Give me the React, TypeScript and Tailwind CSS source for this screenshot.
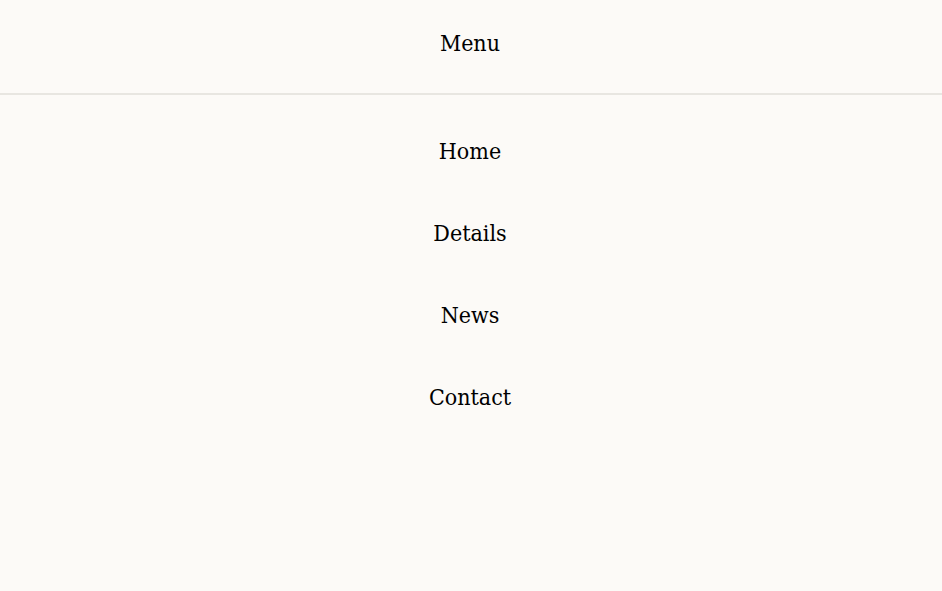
export default function App() {
  const items = ["Home", "Details", "News", "Contact"];
  return (
    <div className="min-h-[591px] w-full bg-[#fcfaf7] text-black" style={{ fontFamily: '"DejaVu Serif", serif' }}>
      <header className="flex h-[95px] items-center justify-center border-b-2 border-[#e8e6e1] pb-[7px] pr-[2px]">
        <h1 className="font-stretch-condensed text-[23px] leading-none">Menu</h1>
      </header>
      <nav className="flex flex-col items-center pt-[15px] pr-[2px]">
        {items.map((item) => (
          <a key={item} href="#" className="flex h-[82px] items-center font-stretch-condensed text-[23px] leading-none">
            {item}
          </a>
        ))}
      </nav>
    </div>
  );
}
